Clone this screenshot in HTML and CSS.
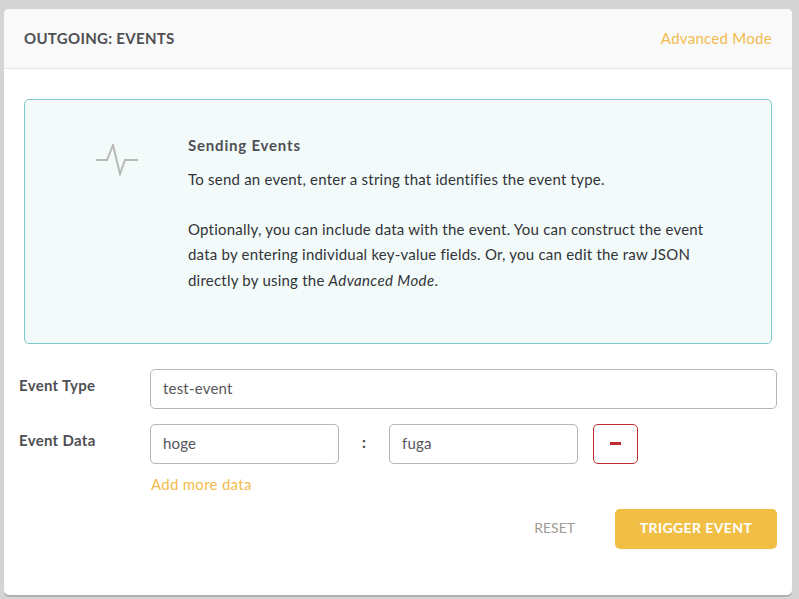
FILE: index.html
```html
<!DOCTYPE html>
<html lang="en">
<head>
  <meta charset="UTF-8" />
  <title>Outgoing: Events</title>
  <link rel="stylesheet" href="styles.css">
</head>
<body>
  <main class="panel">
    <header class="panel-header">
      <h2>Outgoing: Events</h2>
      <a class="link" href="#">Advanced Mode</a>
    </header>

    <div class="panel-body">
      <section class="notice">
        <div class="notice-icon">
          <svg width="42" height="32" viewBox="0 0 42 32" fill="none" stroke="#b9b9b9" stroke-width="2">
            <path d="M0 16H11L17 1L24 30L29 16H42" />
          </svg>
        </div>
        <div class="notice-text">
          <h4>Sending Events</h4>
          <p>To send an event, enter a string that identifies the event type.</p>
          <p>Optionally, you can include data with the event. You can construct the event data by entering individual key-value fields. Or, you can edit the raw JSON directly by using the <em>Advanced Mode</em>.</p>
        </div>
      </section>

      <form class="event-form">
        <div class="form-row">
          <label>Event Type</label>
          <input type="text" class="grow" value="test-event" />
        </div>
        <div class="form-row">
          <label>Event Data</label>
          <input type="text" class="field-key" value="hoge" />
          <span class="colon">:</span>
          <input type="text" class="field-value" value="fuga" />
          <button type="button" class="btn-remove"><span></span></button>
        </div>
        <a class="link add-more" href="#">Add more data</a>
        <div class="form-actions">
          <button type="reset" class="btn-reset">RESET</button>
          <button type="button" class="btn-trigger">TRIGGER EVENT</button>
        </div>
      </form>
    </div>
  </main>
</body>
</html>
```

FILE: styles.css
```css
html, body {
  height: 100%;
}
body {
  background: #d4d4d4;
  font-family: Lato, sans-serif;
  color: #4f4f54;
  margin: 0;
  padding: 9px 7px 4px 4px;
  box-sizing: border-box;
  overflow: hidden;
}
.panel {
  height: 586px;
  background: white;
  border-radius: 5px;
  box-shadow: 0 2px 0 #b0b0b0;
}
.panel-header {
  display: flex;
  justify-content: space-between;
  align-items: center;
  height: 60px;
  padding: 0 20px 1px;
  box-sizing: border-box;
  background: #f9f9f9;
  border-bottom: 1px solid #e6e6e6;
  border-radius: 5px 5px 0 0;
}
.panel-header h2 {
  margin: 0;
  font-size: 15px;
  font-weight: 700;
  letter-spacing: 0.3px;
  text-transform: uppercase;
}
.link {
  color: #f3bc4c;
  font-size: 15px;
  letter-spacing: 0.28px;
  text-decoration: none;
}
.panel-body {
  padding: 30px 20px 0;
}
.notice {
  display: flex;
  height: 245px;
  box-sizing: border-box;
  background: #f2fbfa;
  border: 1px solid #7fc9c9;
  border-radius: 5px;
}
.notice-icon {
  width: 163px;
  padding: 44px 0 0 71px;
  box-sizing: border-box;
}
.notice-text {
  width: 530px;
  padding-top: 34px;
  font-size: 15px;
  letter-spacing: 0.22px;
  line-height: 25.5px;
  color: #333338;
}
.notice-text em {
  letter-spacing: 0.4px;
}
.notice-text h4 {
  margin: 0 0 11px;
  color: #4f4f54;
  font-size: 15px;
  font-weight: 700;
  letter-spacing: 0.8px;
  line-height: 22px;
}
.notice-text p {
  margin: 0 0 24px;
}
.event-form {
  margin: 25px -5px 0;
}
.form-row {
  display: flex;
  align-items: flex-start;
  margin-bottom: 15px;
}
label {
  width: 131px;
  flex-shrink: 0;
  padding-top: 7px;
  font-size: 15px;
  font-weight: 700;
  letter-spacing: 0.3px;
}
input[type='text'] {
  height: 40px;
  padding: 0 12px 2px;
  border: 1px solid #b5b5b5;
  border-radius: 5px;
  box-sizing: border-box;
  font-family: inherit;
  font-size: 15px;
  letter-spacing: 0.2px;
  color: #55555a;
}
.grow {
  flex: 1;
}
.field-key, .field-value {
  width: 189px;
}
.colon {
  width: 50px;
  text-align: center;
  font-size: 15px;
  font-weight: 900;
  line-height: 37px;
}
.btn-remove {
  display: flex;
  align-items: center;
  justify-content: center;
  width: 45px;
  height: 40px;
  margin-left: 15px;
  background: white;
  border: 1px solid #bf2a30;
  border-radius: 5px;
}
.btn-remove span {
  width: 11px;
  height: 3px;
  margin-bottom: 1px;
  background: #bf2a30;
}
.add-more {
  display: block;
  margin: -5px 0 0 132px;
  line-height: 20px;
}
.form-actions {
  display: flex;
  justify-content: flex-end;
  align-items: center;
  margin-top: 15px;
}
.form-actions button {
  font-family: inherit;
  font-size: 14px;
  height: 40px;
  border: none;
  border-radius: 5px;
  padding: 0 0 3px;
}
.btn-reset {
  background: none;
  color: #a09a94;
  margin-right: 40px;
}
.btn-trigger {
  width: 162px;
  background: #f1bf45;
  color: white;
  font-weight: 700;
  letter-spacing: 0.4px;
}
```
